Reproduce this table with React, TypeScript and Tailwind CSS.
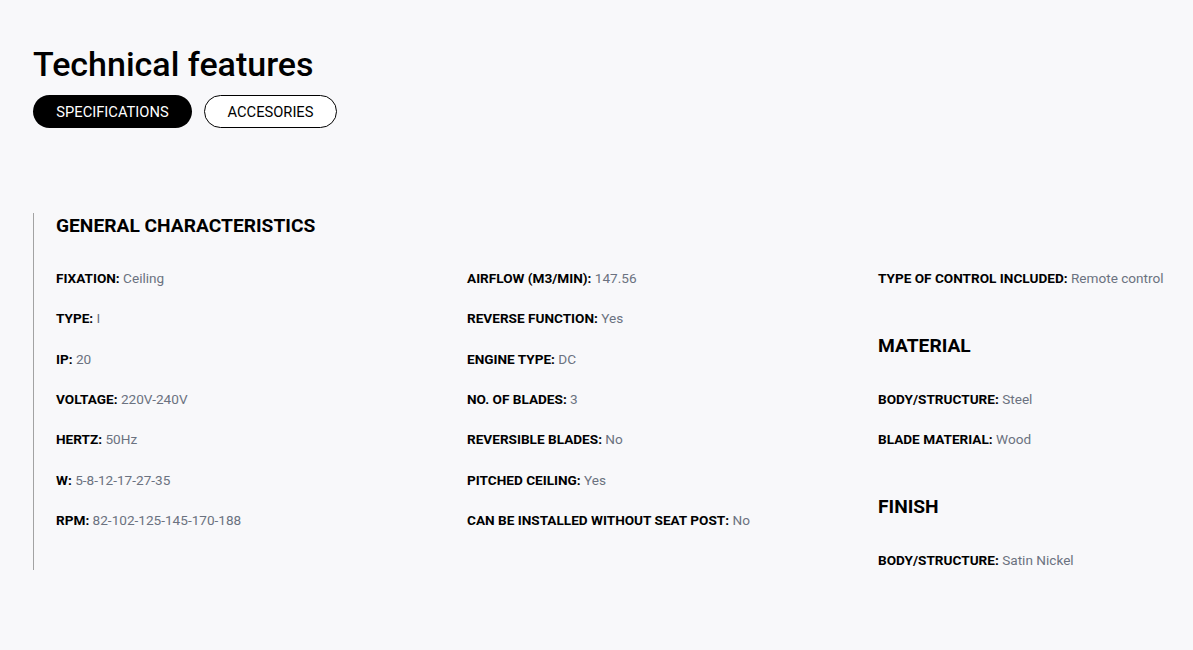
import React from "react";

type Item = [string, string];

const col1: Item[] = [
  ["FIXATION", "Ceiling"],
  ["TYPE", "I"],
  ["IP", "20"],
  ["VOLTAGE", "220V-240V"],
  ["HERTZ", "50Hz"],
  ["W", "5-8-12-17-27-35"],
  ["RPM", "82-102-125-145-170-188"],
];

const col2: Item[] = [
  ["AIRFLOW (M3/MIN)", "147.56"],
  ["REVERSE FUNCTION", "Yes"],
  ["ENGINE TYPE", "DC"],
  ["NO. OF BLADES", "3"],
  ["REVERSIBLE BLADES", "No"],
  ["PITCHED CEILING", "Yes"],
  ["CAN BE INSTALLED WITHOUT SEAT POST", "No"],
];

function Row({ item }: { item: Item }) {
  return (
    <div className="text-[13.6px] leading-[20px] whitespace-nowrap">
      <span className="font-bold text-black">{item[0]}:</span>{" "}
      <span className="text-[#6b7280]">{item[1]}</span>
    </div>
  );
}

function Col({ items }: { items: Item[] }) {
  return (
    <div className="flex flex-col gap-[20.33px]">
      {items.map((it) => (
        <Row key={it[0]} item={it} />
      ))}
    </div>
  );
}

export default function App() {
  return (
    <div
      className="min-h-[650px] w-full bg-[#f8f8fa] text-black"
      style={{ fontFamily: "Roboto, 'Liberation Sans', sans-serif" }}
    >
      <div className="px-[33px] pt-[44px]">
        <h1 className="text-[34px] font-medium leading-[40px]">
          Technical features
        </h1>
        <div className="mt-[11px] flex gap-[12px]">
          <button className="h-[33px] w-[159px] rounded-full bg-black pt-[1px] text-[14.7px] text-white">
            SPECIFICATIONS
          </button>
          <button className="h-[33px] w-[133px] rounded-full border border-black bg-white pt-[1px] text-[14.7px] text-black">
            ACCESORIES
          </button>
        </div>
      </div>
      <div className="ml-[33px] mt-[85px] border-l border-[#a3a3a3] pl-[22px]">
        <h2 className="text-[19.2px] font-bold leading-[26px]">GENERAL CHARACTERISTICS</h2>
        <div className="mt-[29px] grid grid-cols-[411px_411px_1fr]">
          <Col items={col1} />
          <Col items={col2} />
          <div className="flex flex-col">
            <Row item={["TYPE OF CONTROL INCLUDED", "Remote control"]} />
            <h3 className="mt-[45px] text-[19.2px] font-bold leading-[26px]">MATERIAL</h3>
            <div className="mt-[30px] flex flex-col gap-[20.33px]">
              <Row item={["BODY/STRUCTURE", "Steel"]} />
              <Row item={["BLADE MATERIAL", "Wood"]} />
            </div>
            <h3 className="mt-[45px] text-[19.2px] font-bold leading-[26px]">FINISH</h3>
            <div className="mt-[30px]">
              <Row item={["BODY/STRUCTURE", "Satin Nickel"]} />
            </div>
          </div>
        </div>
      </div>
    </div>
  );
}
